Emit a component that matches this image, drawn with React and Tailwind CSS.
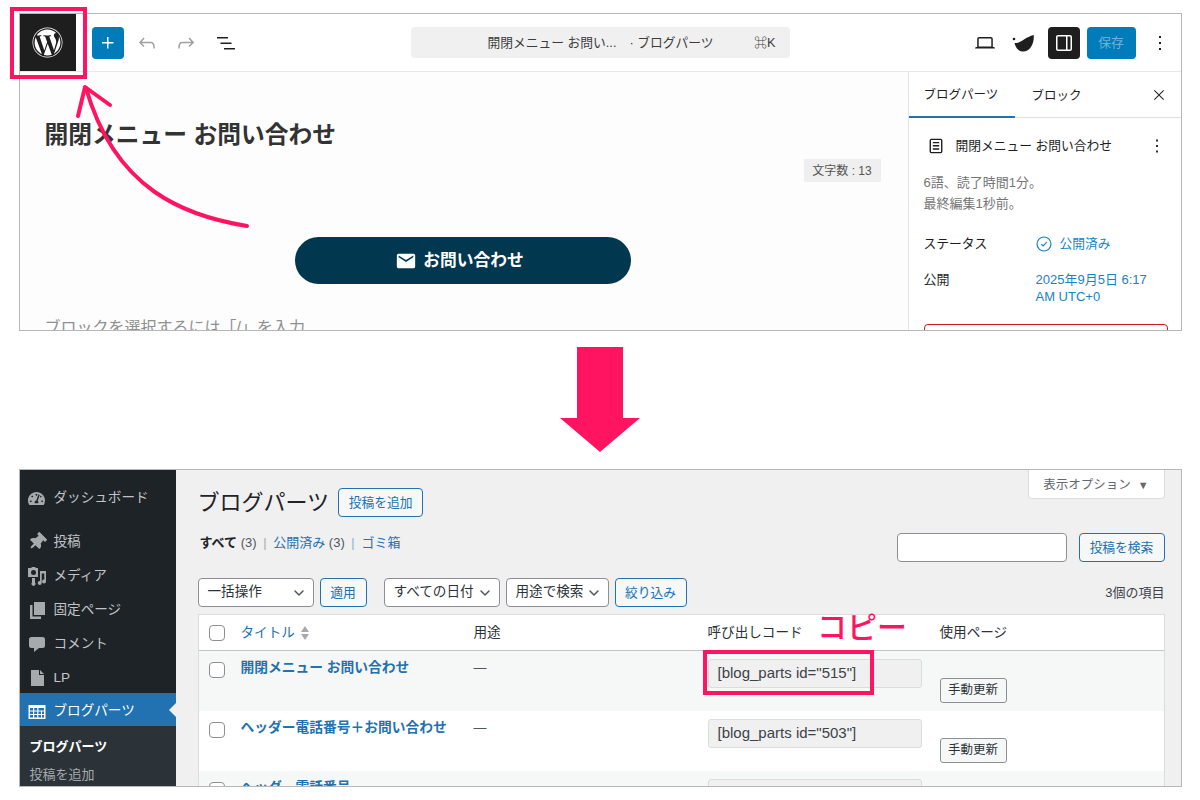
import React from "react";
import { FaWordpress, FaTachometerAlt, FaThumbtack } from "react-icons/fa";
import { MdEmail } from "react-icons/md";
import { ChevronDown } from "lucide-react";

const pink = "#ff1461";

const WpIcon = ({ d, size = 24, className = "" }) => (
    <svg viewBox="0 0 24 24" width={size} height={size} fill="currentColor" className={className}>
        <path d={d} />
    </svg>
);

const icons = {
    plus: "M11 12.5V17.5H12.5V12.5H17.5V11H12.5V6H11V11H6V12.5H11Z",
    undo: "M18.3 11.7c-.6-.6-1.4-.9-2.3-.9H6.7l2.9-3.3-1.1-1-4.5 5L8.5 16l1-1-2.7-2.7H16c.5 0 .9.2 1.3.5 1 1 1 3.4 1 4.5v.3h1.5v-.2c0-1.5 0-4.3-1.5-5.7z",
    redo: "M15.6 6.5l-1.1 1 2.9 3.3H8c-.9 0-1.7.3-2.3.9-1.4 1.5-1.4 4.2-1.4 5.6v.2h1.5v-.3c0-1.1 0-3.5 1-4.5.3-.3.7-.5 1.3-.5h9.2L14.5 15l1.1 1.1 4.6-4.6-4.6-5z",
    list: "M3 6h11v1.5H3V6Zm3.5 5.5h11V13h-11v-1.5ZM21 17H10v1.5h11V17Z",
    laptop: "M20.5 16h-.7V8c0-1.1-.9-2-2-2H6.2c-1.1 0-2 .9-2 2v8h-.7c-.8 0-1.5.7-1.5 1.5h20c0-.8-.7-1.5-1.5-1.5zM5.7 8c0-.3.2-.5.5-.5h11.6c.3 0 .5.2.5.5v7.6H5.7V8z",
    sidebar: "M18 4H6c-1.1 0-2 .9-2 2v12c0 1.1.9 2 2 2h12c1.1 0 2-.9 2-2V6c0-1.1-.9-2-2-2zm-4 14.5H6c-.3 0-.5-.2-.5-.5V6c0-.3.2-.5.5-.5h8v13zm4.5-.5c0 .3-.2.5-.5.5h-2.5v-13H18c.3 0 .5.2.5.5v12z",
    dots: "M13 19h-2v-2h2v2zm0-6h-2v-2h2v2zm0-6h-2V5h2v2z",
    close: "m13.06 12 6.47-6.47-1.06-1.06L12 10.94 5.53 4.47 4.47 5.53 10.94 12l-6.47 6.47 1.06 1.06L12 13.06l6.47 6.47 1.06-1.06L13.06 12Z",
};

const BlobIcon = () => (
    <svg viewBox="0 0 24 18" width="24" height="18" fill="#1e1e1e">
        <circle cx="2" cy="5" r="1.300" />
        <path d="M2.500 9C6 9.500 9 7.500 12 5.500 15 3.500 18 2 21.700 1 22.500 8 19 17.500 11 17.500 6 17.500 3.500 13 2.500 9Z" />
    </svg>
);

const DocIcon = () => (
    <svg viewBox="0 0 24 24" width="22" height="22" fill="#1e1e1e">
        <path d="M15.5 7.5h-7V9h7V7.5Zm-7 3.5h7v1.5h-7V11Zm7 3.5h-7V16h7v-1.5Z" />
        <path
            fillRule="evenodd"
            d="M17 4H7a2 2 0 0 0-2 2v12a2 2 0 0 0 2 2h10a2 2 0 0 0 2-2V6a2 2 0 0 0-2-2ZM7 5.5h10a.5.5 0 0 1 .5.5v12a.5.5 0 0 1-.5.5H7a.5.5 0 0 1-.5-.5V6a.5.5 0 0 1 .5-.5Z"
        />
    </svg>
);

const MediaIcon = () => (
    <svg viewBox="0 0 20 20" width="20" height="20" fill="currentColor">
        <path fillRule="evenodd" d="M1 2h3l1-1h3l1 1h2v9H1V2Zm5.500 2a2.500 2.500 0 1 0 0 5 2.500 2.500 0 0 0 0-5Z" />
        <path d="M13 5h6v10.500a2 2 0 1 1-1.700-2V7.500h-2.600V17a2 2 0 1 1-1.700-2V5Z" />
        <path d="M5 12h3v4.500a2 2 0 1 1-3 0V12Z" />
    </svg>
);

const PagesIcon = () => (
    <svg viewBox="0 0 20 20" width="20" height="20" fill="currentColor">
        <path d="M7 2h11v13H7z" />
        <path d="M3 5h2.500v11.500H14V19H3z" />
    </svg>
);

const CommentIcon = () => (
    <svg viewBox="0 0 20 20" width="20" height="20" fill="currentColor">
        <path d="M4.500 3h11A2.500 2.500 0 0 1 18 5.500v6a2.500 2.500 0 0 1-2.500 2.500H12l-5 4v-4H4.500A2.500 2.500 0 0 1 2 11.500v-6A2.500 2.500 0 0 1 4.500 3Z" />
    </svg>
);

const FileIcon = () => (
    <svg viewBox="0 0 20 20" width="20" height="20" fill="currentColor">
        <path d="M4 2h8v5h5v11H4V2Zm9 0 4 4h-4V2Z" />
    </svg>
);

const TableIcon = () => (
    <svg viewBox="0 0 20 20" width="20" height="20" fill="currentColor">
        <path
            fillRule="evenodd"
            d="M1.500 3h17v14h-17V3ZM3 6v2.500h3V6H3Zm4.200 0v2.500h3V6h-3Zm4.200 0v2.500H17V6h-5.600ZM3 9.500V12h3V9.500H3Zm4.200 0V12h3V9.500h-3Zm4.200 0V12H14V9.500h-2.600Zm3.600 0V12h2V9.500h-2ZM3 13v2.500h3V13H3Zm4.200 0v2.500h3V13h-3Zm4.200 0v2.500H14V13h-2.600Zm3.600 0v2.500h2V13h-2Z"
        />
    </svg>
);

const menu = [
    { label: "投稿", icon: <FaThumbtack size={18} className="rotate-45" /> },
    { label: "メディア", icon: <MediaIcon /> },
    { label: "固定ページ", icon: <PagesIcon /> },
    { label: "コメント", icon: <CommentIcon /> },
    { label: "LP", icon: <FileIcon /> },
];

const MenuItem = ({ label, icon }) => (
    <div className="h-[34px] flex items-center pt-[4px] pl-[7px] gap-[7px] text-[13.6px] text-[#c3c4c7]">
        <span className="w-[20px] flex justify-center text-[#a7aaad]">{icon}</span>
        {label}
    </div>
);

const Checkbox = () => <div className="w-4 h-4 rounded bg-white border border-[#8c8f94]" />;

const OutlineButton = ({ children, className = "" }) => (
    <div className={"h-[29px] flex items-center justify-center rounded border border-[#2271b1] bg-[#f6f7f7] text-[12.75px] text-[#2271b1] " + className}>
        {children}
    </div>
);

const FilterSelect = ({ label, className = "" }) => (
    <div className={"h-[29px] flex items-center justify-between pl-[9px] pr-[6px] rounded border border-[#8c8f94] bg-white text-[13.6px] text-[#2c3338] whitespace-nowrap " + className}>
        {label}
        <ChevronDown size={16} strokeWidth={2.25} className="shrink-0 text-[#50575e]" />
    </div>
);

const TableRow = ({ title, code, odd }) => (
    <div className={"h-[60px] grid grid-cols-[42px_233px_234px_232px_1fr] " + (odd ? "bg-[#f6f7f7]" : "bg-white")}>
        <div className="pl-[10px] pt-[11px]">
            <Checkbox />
        </div>
        <div className="pt-[7px] text-[13.75px] leading-5 font-bold text-[#2271b1] whitespace-nowrap">{title}</div>
        <div className="pt-[7px] text-[13px] leading-5 text-[#50575e]">—</div>
        <div className="pt-[8px]">
            <div className="w-[214px] h-[29px] flex items-center pl-[9px] rounded-[3px] border border-[#dcdcde] bg-[#f0f0f0] text-[15px] text-[#3c434a]">
                {code}
            </div>
        </div>
        <div className="pt-[27px]">
            <div className="w-[67px] h-[25px] flex items-center justify-center rounded-[3px] border border-[#8c8f94] bg-[#f6f7f7] text-[12.5px] text-[#2c3338]">
                手動更新
            </div>
        </div>
    </div>
);

const EditorShot = () => (
    <div className="h-[318px] border-[1.5px] border-[#b6b7bb] overflow-hidden bg-white">
        <div className="h-[58px] flex items-center border-b border-[#e8e8e8]">
            <div className="w-[56px] h-[57px] bg-[#1e1e1e] flex items-center justify-center text-white">
                <FaWordpress size={31} />
            </div>
            <div className="w-[32px] h-[32px] ml-[16px] rounded-sm bg-[#007cba] flex items-center justify-center text-white">
                <WpIcon d={icons.plus} />
            </div>
            <WpIcon d={icons.undo} className="ml-[11px] text-[#a0a0a0]" />
            <WpIcon d={icons.redo} className="ml-[15px] text-[#a0a0a0]" />
            <WpIcon d={icons.list} className="ml-[16px] text-[#1e1e1e]" />
            <div className="w-[379px] h-[31px] ml-[173px] rounded bg-[#f0f0f0] flex items-center text-[12.75px] text-[#3c3c3c]">
                <span className="ml-[77px]">開閉メニュー お問い...</span>
                <span className="ml-[13px]">· ブログパーツ</span>
                <span className="ml-auto mr-[14px]">⌘K</span>
            </div>
            <WpIcon d={icons.laptop} className="ml-[183px] text-[#1e1e1e]" />
            <div className="ml-[15px]">
                <BlobIcon />
            </div>
            <div className="w-[32px] h-[32px] ml-[12px] rounded-sm bg-[#1e1e1e] flex items-center justify-center text-white">
                <WpIcon d={icons.sidebar} />
            </div>
            <div className="w-[49px] h-[32px] ml-[7px] rounded-sm bg-[#007cba] flex items-center justify-center text-[12.75px] text-[#6fb2d8]">
                保存
            </div>
            <WpIcon d={icons.dots} className="ml-[12px] text-[#1e1e1e]" />
        </div>
        <div className="flex h-[260px]">
            <div className="flex-1 bg-[#fdfdfd] pl-[25px] pr-[27px] border-r border-[#e4e4e4]">
                <div className="pt-[47px] text-[23.75px] leading-[32px] font-bold text-[#333]">開閉メニュー お問い合わせ</div>
                <div className="flex justify-end mt-[8px]">
                    <div className="w-[77px] h-[23px] bg-[#efefef] flex items-center justify-center text-[12px] text-[#555]">
                        文字数 : 13
                    </div>
                </div>
                <div className="w-[336px] h-[47px] mt-[55px] ml-[250px] pr-[6px] rounded-full bg-[#02384f] flex items-center justify-center gap-[6px] text-[16.75px] font-bold text-white">
                    <MdEmail size={22} />
                    お問い合わせ
                </div>
                <div className="mt-[34px] text-[16px] leading-5 text-[#8f8f8f] whitespace-nowrap">ブロックを選択するには「/」を入力</div>
            </div>
            <div className="w-[272px] shrink-0 bg-white">
                <div className="h-[46px] flex items-center border-b border-[#e0e0e0] text-[12.5px] text-[#1e1e1e]">
                    <div className="w-[106px] h-[46px] flex items-center pt-[3px] pl-[15px] border-b-2 border-[#2271b1]">ブログパーツ</div>
                    <div className="ml-[17px] mt-[3px]">ブロック</div>
                    <WpIcon d={icons.close} size={16} className="ml-auto mr-[14px]" />
                </div>
                <div className="flex items-center h-[26px] mt-[15px] pl-[16px] pr-[13px] text-[12.75px] text-[#1e1e1e]">
                    <DocIcon />
                    <span className="ml-[9px]">開閉メニュー お問い合わせ</span>
                    <WpIcon d={icons.dots} size={22} className="ml-auto" />
                </div>
                <div className="mt-[13px] pl-[15px] text-[13px] leading-[21px] text-[#757575]">
                    <div>6語、読了時間1分。</div>
                    <div>最終編集1秒前。</div>
                </div>
                <div className="flex items-center mt-[20px] pl-[15px] text-[12.75px] leading-5 text-[#1e1e1e]">
                    <span className="w-[112px]">ステータス</span>
                    <svg viewBox="0 0 16 16" width="16" height="16" fill="none" stroke="#1585c4" strokeWidth="1.200">
                        <circle cx="8" cy="8" r="7" />
                        <path d="M5.200 8.200 7.200 10l3.600-3.800" />
                    </svg>
                    <span className="ml-[8px] text-[#1585c4]">公開済み</span>
                </div>
                <div className="flex mt-[17px] pl-[15px] text-[13px] leading-[17px] text-[#1e1e1e]">
                    <span className="w-[112px]">公開</span>
                    <span className="text-[#1585c4]">
                        2025年9月5日 6:17
                        <br />
                        AM UTC+0
                    </span>
                </div>
                <div className="h-[40px] ml-[15px] mr-[13px] mt-[19px] rounded-sm border border-[#cc1818]" />
            </div>
        </div>
    </div>
);

const AdminShot = () => (
    <div className="h-[318px] border-[1.5px] border-[#b6b7bb] overflow-hidden flex bg-[#f0f0f0]">
        <div className="w-[156px] shrink-0 bg-[#1d2327] pt-[9px]">
            <MenuItem label="ダッシュボード" icon={<FaTachometerAlt size={17} />} />
            <div className="h-[10px]" />
            {menu.map((item) => (
                <MenuItem key={item.label} label={item.label} icon={item.icon} />
            ))}
            <div className="relative h-[33px] flex items-center pt-[4px] pl-[7px] gap-[7px] bg-[#2271b1] text-[13.6px] text-white">
                <span className="w-[20px] flex justify-center">
                    <TableIcon />
                </span>
                ブログパーツ
                <div className="absolute right-0 top-[10px] w-0 h-0 border-y-[7px] border-y-transparent border-r-[7px] border-r-[#f0f0f0]" />
            </div>
            <div className="bg-[#2c3338] h-[70px] pt-[7px] pl-[10px] text-[13px]">
                <div className="h-[28px] flex items-center font-bold text-white">ブログパーツ</div>
                <div className="h-[28px] flex items-center text-[#a7aaad]">投稿を追加</div>
            </div>
        </div>
        <div className="flex-1 pl-[22px] pr-[16px]">
            <div className="h-[59px] flex items-start justify-between">
                <div className="flex items-center gap-[9px] pt-[18px]">
                    <span className="text-[22px] leading-[28px] text-[#1d2327]">ブログパーツ</span>
                    <OutlineButton className="w-[85px]">投稿を追加</OutlineButton>
                </div>
                <div className="w-[137px] h-[29px] flex items-center justify-center gap-[7px] pt-[2px] bg-white border-x border-b border-[#dcdcde] rounded-b text-[12.5px] text-[#646970]">
                    表示オプション
                    <span className="text-[11px]">▼</span>
                </div>
            </div>
            <div className="h-[49px] flex items-start justify-between pt-[4px]">
                <div className="pl-[2px] text-[13px] leading-5 text-[#50575e] whitespace-nowrap">
                    <span className="font-bold text-[#1d2327]">すべて</span> (3) <span className="mx-[3px] text-[#a7aaad]">|</span>{" "}
                    <span className="text-[#2271b1]">公開済み</span> (3) <span className="mx-[3px] text-[#a7aaad]">|</span>{" "}
                    <span className="text-[#2271b1]">ゴミ箱</span>
                </div>
                <div className="flex gap-[12px]">
                    <div className="w-[170px] h-[29px] rounded border border-[#8c8f94] bg-white" />
                    <OutlineButton className="w-[86px]">投稿を検索</OutlineButton>
                </div>
            </div>
            <div className="h-[29px] flex items-center">
                <FilterSelect label="一括操作" className="w-[116px]" />
                <OutlineButton className="w-[47px] ml-[6px]">適用</OutlineButton>
                <FilterSelect label="すべての日付" className="w-[116px] ml-[17px]" />
                <FilterSelect label="用途で検索" className="w-[103px] ml-[6px]" />
                <OutlineButton className="w-[72px] ml-[6px]">絞り込み</OutlineButton>
                <span className="ml-auto text-[13px] text-[#3c434a]">3個の項目</span>
            </div>
            <div className="mt-[7px] border border-[#dcdcde] bg-white">
                <div className="h-[36px] pt-[1px] grid grid-cols-[42px_233px_234px_232px_1fr] items-center border-b border-[#c3c4c7] text-[13.6px] text-[#2c3338]">
                    <div className="pl-[10px]">
                        <Checkbox />
                    </div>
                    <div className="flex items-center gap-[5px] text-[#2271b1]">
                        タイトル
                        <svg viewBox="0 0 10 16" width="10" height="16" fill="#a7aaad">
                            <path d="M5 1 9 7H1zM5 15 1 9h8z" />
                        </svg>
                    </div>
                    <div>用途</div>
                    <div>呼び出しコード</div>
                    <div>使用ページ</div>
                </div>
                <TableRow title="開閉メニュー お問い合わせ" code={'[blog_parts id="515"]'} odd />
                <TableRow title="ヘッダー電話番号＋お問い合わせ" code={'[blog_parts id="503"]'} />
                <TableRow title="ヘッダー電話番号" code="" odd />
            </div>
        </div>
    </div>
);

export default function App() {
    return (
        <div className="relative w-[1200px] h-[800px] overflow-hidden bg-white pt-[13px] px-[18.5px] font-['Liberation_Sans','Noto_Sans_CJK_JP',sans-serif]">
            <EditorShot />
            <div className="h-[138px] flex justify-center pt-[16px]">
                <svg viewBox="0 0 80 105" width="80" height="105" fill={pink}>
                    <path d="M17 0h46v71h17l-40 34L0 71h17z" />
                </svg>
            </div>
            <AdminShot />

            {/* annotations on top of the screenshots */}
            <div className="absolute left-[10px] top-[7px] w-[77px] h-[72px] border-[4px] border-[#ff1461]" />
            <svg className="absolute left-0 top-0 pointer-events-none" width="300" height="240" fill="none" stroke={pink} strokeWidth="4" strokeLinecap="round" strokeLinejoin="round">
                <path d="M247 226C185 216 115 190 86 88" />
                <path d="M78 116 85 87 110 105" />
            </svg>
            <div className="absolute left-[703px] top-[650px] w-[171px] h-[45px] border-[4px] border-[#ff1461]" />
            <div className="absolute left-[817px] top-[606px] text-[30px] leading-[38px] font-medium text-[#ff1461] font-['Noto_Sans_CJK_JP',sans-serif]">コピー</div>
        </div>
    );
}
